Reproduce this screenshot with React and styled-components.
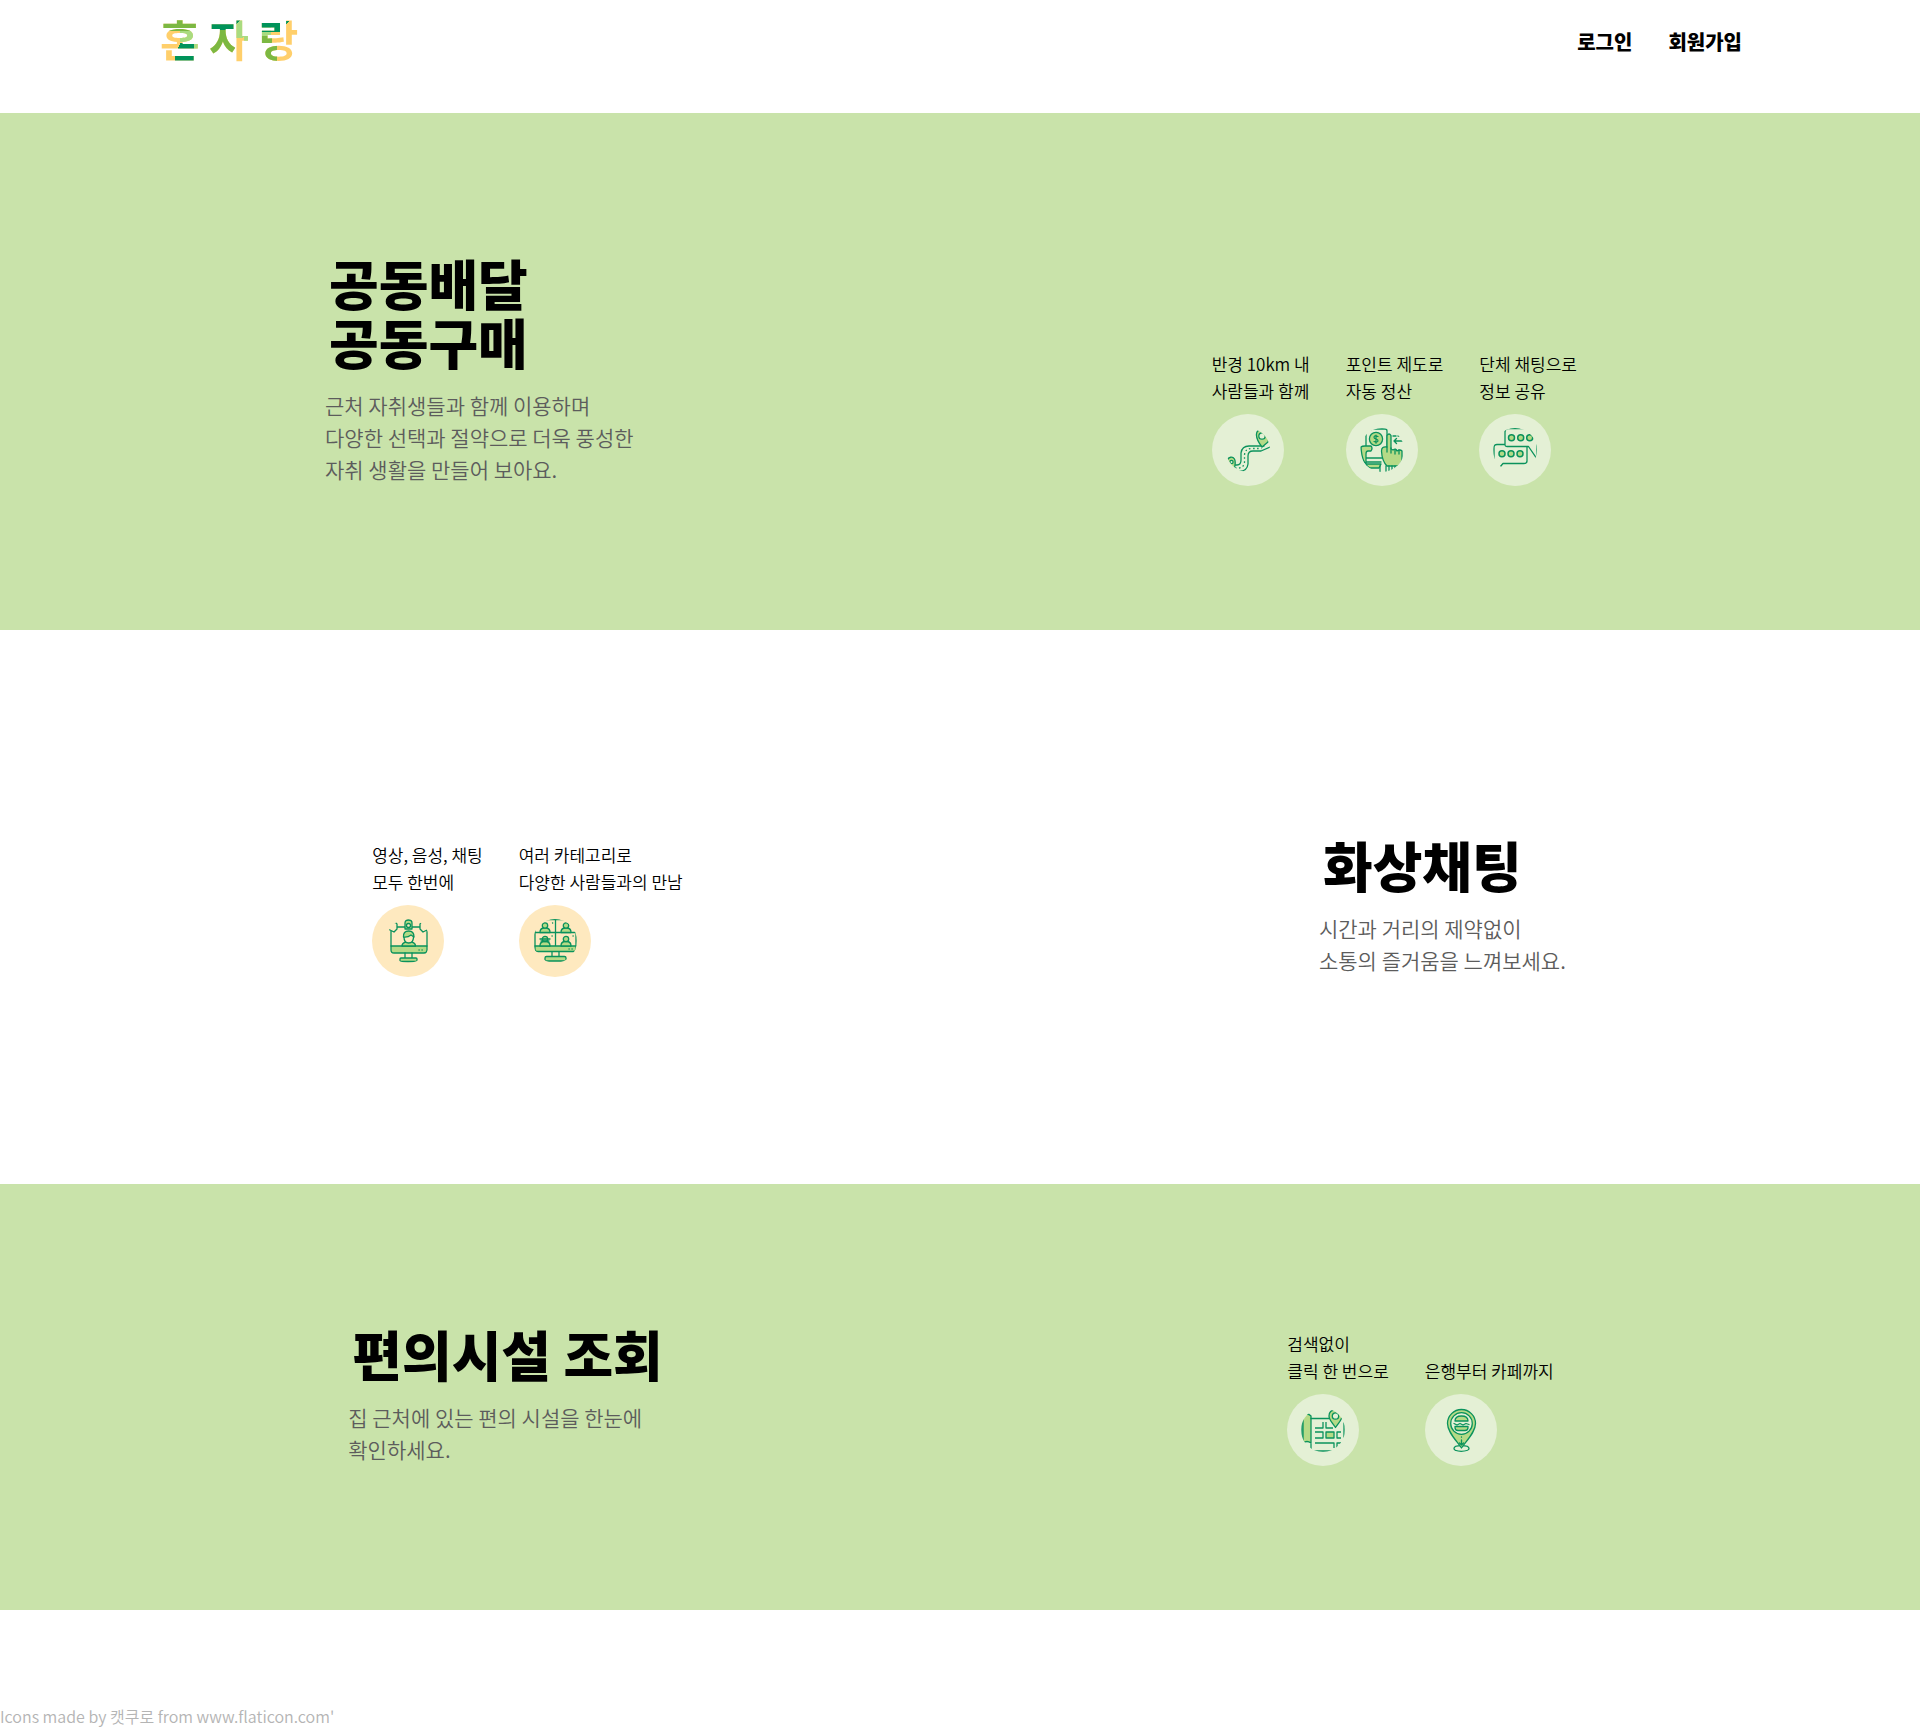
import React from "react";
import styled, { createGlobalStyle } from "styled-components";

const GREEN = "#c9e3aa";
const LINE = "#0a925c";
const FILL = "#b5da86";

const GlobalStyle = createGlobalStyle`
  *, *::before, *::after { box-sizing: border-box; }
  body {
    margin: 0;
    background: #fff;
    color: #000;
    font-family: "Noto Sans CJK KR", "Noto Sans", sans-serif;
  }
  h1, h2, p, ul { margin: 0; padding: 0; }
`;

const Header = styled.header`
  display: flex;
  justify-content: space-between;
  align-items: center;
  padding: 0 160px 37px;
`;

/* Patchwork of brand colours showing through the letters. */
const Logo = styled.a`
  font-size: 43px;
  line-height: 76px;
  font-weight: 700;
  text-decoration: none;
  color: transparent;
  background:
    linear-gradient(#7cb842, #7cb842) 0 0 / 46px 31px no-repeat,
    linear-gradient(#a9db80, #a9db80) 20px 31px / 20px 11px no-repeat,
    linear-gradient(115deg, transparent 5px, #00935a 5px) 15px 43px / 19px 20px no-repeat,
    linear-gradient(#a9db80, #a9db80) 34px 43px / 10px 9px no-repeat,
    linear-gradient(#00935a, #00935a) 46px 16px / 28px 14px no-repeat,
    linear-gradient(50deg, #7cb842 32px, transparent 32px) 46px 30px / 29px 26px no-repeat,
    linear-gradient(135deg, #00935a 6px, #a9db80 6px, #a9db80 20px, transparent 20px) 76px 16px / 10px 22px no-repeat,
    linear-gradient(#a9db80, #a9db80) 84px 33px / 6px 8px no-repeat,
    linear-gradient(135deg, transparent 7px, #00935a 7px) 97px 18px / 23px 14px no-repeat,
    linear-gradient(#a9db80, #a9db80) 97px 18px / 14px 18px no-repeat,
    linear-gradient(#7cb842, #7cb842) 97px 36px / 15px 8px no-repeat,
    linear-gradient(135deg, #00935a 4px, transparent 4px) 124px 21px / 6px 6px no-repeat,
    linear-gradient(#7cb842, #7cb842) 99px 45px / 18px 20px no-repeat,
    #ffcf6b;
  background-clip: text;
  -webkit-background-clip: text;
`;

const Nav = styled.nav`
  display: flex;
  padding-top: 8px;
`;

const NavLink = styled.a`
  margin: 0 18px;
  color: #000;
  font-size: 20px;
  line-height: 30px;
  font-weight: 900;
  text-decoration: none;
`;

const Section = styled.section`
  display: flex;
  justify-content: space-around;
  align-items: flex-end;
  padding: ${({ $tinted }) => ($tinted ? "140px 45px 144px" : "205px 45px 207px")};
  background: ${({ $tinted }) => ($tinted ? GREEN : "#fff")};
`;

const Title = styled.h2`
  padding-left: 4px;
  font-size: 54px;
  line-height: 59px;
  font-weight: 900;
  white-space: pre-line;
`;

const Description = styled.p`
  margin-top: 18px;
  padding-bottom: 1px;
  color: #5c5c5c;
  font-size: 21px;
  line-height: 32px;
  font-weight: 350;
  white-space: pre-line;
`;

const FeatureList = styled.ul`
  display: flex;
  align-items: flex-end;
  list-style: none;
`;

const Feature = styled.li`
  margin: 0 18px;
`;

const FeatureText = styled.p`
  margin-bottom: 10px;
  font-size: 17px;
  line-height: 27px;
  font-weight: 350;
  white-space: pre-line;
`;

const IconCircle = styled.div`
  display: flex;
  align-items: center;
  justify-content: center;
  width: 72px;
  height: 72px;
  border-radius: 50%;
  background: ${({ $warm }) => ($warm ? "#fee9bf" : "#e4f0d5")};
`;

const Drawing = styled.svg`
  display: block;
  width: 44px;
  height: 44px;
  border-radius: 50%;
  fill: none;
  stroke: ${LINE};
  stroke-width: 1.3;
  stroke-linecap: round;
  stroke-linejoin: round;
`;

const Footer = styled.footer`
  padding-top: 96px;
  color: #b4b4b4;
  font-size: 16px;
  line-height: 21px;
  font-weight: 350;
`;

const Icon = ({ children }) => (
  <Drawing viewBox="0 0 44 44" aria-hidden="true">
    {children}
  </Drawing>
);

const RouteIcon = () => (
  <Icon>
    <path d="M8 37h3q4 0 4-5v-7q1-7 8-7h15M12 43q9 1 10-7v-8q0-5 5-5h8l9-4" />
    <path d="M9 40q9 1 9.500-6v-7q.5-6.500 7-6.500h10" strokeDasharray="1.500 2.500" strokeLinecap="butt" />
    <path fill={FILL} d="M36 19c-3-4-6-9-5.500-13 .5-5 6-5 8.500-2 3 3 4 7 3 10z" />
    <circle cx="36" cy="8" r="3.200" fill="#e4f0d5" />
    <path fill={FILL} d="M8.500 40C3 38 1 35 1.500 32c1-3 5-4 7-1 1.500 3 .5 6 0 9z" />
    <circle cx="5.500" cy="34" r="1.600" fill="#e4f0d5" />
  </Icon>
);

const PaymentIcon = () => (
  <Icon>
    <path d="M6 6v13M11 2q1-1 2-1h12q2 0 2 2v16M6 30h17M6 34h15" />
    <circle cx="16" cy="11" r="6.600" fill={FILL} />
    <path d="M18 8.500q-4-1.500-4 .8 0 1.200 2 1.700 2.200.6 2 1.800-.5 2-4 .7M16 7v8.200" strokeWidth="1.200" />
    <path fill={FILL} d="M1 19q1-1 4-1h6q2 2 0 5H8q-2 0-2 3v10h15l-2 4H10Q2 36 1 19z" />
    <path fill={FILL} d="M27 7.500q2-3 4 0V21l2 1q3-2 4 1 3-2 5 0v8q0 4-4 7H27q-5-5-5.500-15 0-5 5.500-4z" />
    <path d="M27 19v5M31 20v5M35 22v4M39 22v4M20 38v6M26 38v6M29 38v5M32 38v5M35 38v4M38 8h3M33 8h3M34 13h10M36.500 10.500L34 13l2.500 2.500" />
  </Icon>
);

const ChatIcon = () => (
  <Icon>
    <path d="M12 4V17q0 1.500 2 1.500h21.500L44 31V6M12 4q0-3 3-3.300h16M12 16.500H4q-3 0-3 3V32M34 18.500V33q0 2.500-3 2.500H10L7 39" />
    <g fill={FILL} strokeWidth="1.500">
      <circle cx="18.500" cy="9.700" r="3" />
      <circle cx="27.700" cy="9.700" r="3" />
      <circle cx="36.700" cy="9.700" r="3" />
      <circle cx="9" cy="25.700" r="3" />
      <circle cx="18" cy="25.700" r="3" />
      <circle cx="27" cy="25.700" r="3" />
    </g>
  </Icon>
);

const VideoIcon = () => (
  <Icon>
    <path fill={FILL} d="M5 27h36v4q0 3-3 3H8q-3 0-3-3z" />
    <path d="M5 27V12M41 27V12M2 10l6 3 2-2M43 10l-6 3-2-2M7 4q3-1 4 1v5l-2 2M38 4q-3-1-4 1v5l2 2M11 8h23M19 34v5M26 34v5M33 31h.2M36 31h.2" />
    <rect x="14" y="39" width="17" height="3.500" rx="1" fill={FILL} />
    <path fill={FILL} d="M19 10V4q0-3 3.500-3T26 4v6z" />
    <circle cx="22.500" cy="6.500" r="2" fill="#fee9bf" />
    <path fill={FILL} d="M16 27q0-3 4-4h5.500q4 1 4 4z" />
    <path fill="#fee9bf" d="M18 18q0 6 4.700 6t4.800-6-4.800-5-4.700 5z" />
    <path fill={FILL} d="M17.500 18q-.5-6 5.200-6 5.300 0 5.300 6l-3-2q-3 2.500-7.500 2z" />
  </Icon>
);

const Person = ({ x, y }) => (
  <g transform={`translate(${x} ${y})`}>
    <path fill={FILL} d="M-5 9q0-4 3.500-4.500h3Q5 5 5 9z" />
    <circle cy="2" r="2.700" fill={FILL} />
  </g>
);

const MeetingIcon = () => (
  <Icon>
    <path d="M2 11v16M43 11v16M2 13.500h41M22.500 1v26M10 2q2-1.500 5-1.500h14q4 0 5 1.500M19.500 4h.2M40 17h.2M19 17h.2" />
    <path fill={FILL} d="M2 27h41v3q0 2.500-3 2.500H5q-3 0-3-2.500z" />
    <Person x={12} y={4.500} />
    <Person x={33} y={4.500} />
    <Person x={12} y={18} />
    <Person x={33} y={18} />
    <path d="M7 20h10M8 22h8" />
    <path d="M19 33v4.500M26 33v4.500M36 30h.2M39 30h.2" />
    <rect x="12" y="37.500" width="21" height="4.500" rx="1.500" fill={FILL} />
  </Icon>
);

const MapIcon = () => (
  <Icon>
    <path fill={FILL} d="M2 8q4-4 8 0v27q-4-3-8 0z" />
    <path d="M10 10.500h18M43 15v14M10 36v4q0 3 3 3h20M1 15v14" />
    <path strokeLinecap="butt" d="M14 20h8v-6M25 14v6h7M14 24h8v6h-8M40 24h-4v6h4M14 35h19v5M36 40v-5h4" />
    <rect x="25" y="24" width="8" height="6" fill={FILL} />
    <path fill={FILL} d="M34.500 19.500C31 14 28 12 28 8q0-6 6.500-6T41 8c0 4-3 6-6.500 11.500z" />
    <circle cx="34.500" cy="8" r="3.200" fill="#e4f0d5" />
  </Icon>
);

const PlaceIcon = () => (
  <Icon>
    <ellipse cx="22.500" cy="40.500" rx="7.500" ry="2.800" />
    <path fill={FILL} d="M22.500 40C17 32 8.500 24 8.500 15.500a14 14 0 0 1 28 0C36.500 24 28 32 22.500 40z" />
    <circle cx="22.500" cy="15.500" r="10.800" fill="#e4f0d5" />
    <path fill={FILL} d="M16 13q0-5 6.500-5t6.500 5zM16 18.500h13v1q0 3-3 3h-7q-3 0-3-3z" />
    <path d="M15 15.500l3 1.500 3-1.500 3 1.500 3-1.500 3 1M22.500 29v.2M22.500 32v5M20.500 35l2 2 2-2" />
  </Icon>
);

const sections = [
  {
    title: "공동배달\n공동구매",
    description: "근처 자취생들과 함께 이용하며\n다양한 선택과 절약으로 더욱 풍성한\n자취 생활을 만들어 보아요.",
    tinted: true,
    features: [
      { text: "반경 10km 내\n사람들과 함께", Glyph: RouteIcon },
      { text: "포인트 제도로\n자동 정산", Glyph: PaymentIcon },
      { text: "단체 채팅으로\n정보 공유", Glyph: ChatIcon },
    ],
  },
  {
    title: "화상채팅",
    description: "시간과 거리의 제약없이\n소통의 즐거움을 느껴보세요.",
    tinted: false,
    features: [
      { text: "영상, 음성, 채팅\n모두 한번에", Glyph: VideoIcon },
      { text: "여러 카테고리로\n다양한 사람들과의 만남", Glyph: MeetingIcon },
    ],
  },
  {
    title: "편의시설 조회",
    description: "집 근처에 있는 편의 시설을 한눈에\n확인하세요.",
    tinted: true,
    features: [
      { text: "검색없이\n클릭 한 번으로", Glyph: MapIcon },
      { text: "은행부터 카페까지", Glyph: PlaceIcon },
    ],
  },
];

function Intro({ title, description }) {
  return (
    <div>
      <Title>{title}</Title>
      <Description>{description}</Description>
    </div>
  );
}

function Features({ items, warm }) {
  return (
    <FeatureList>
      {items.map(({ text, Glyph }) => (
        <Feature key={text}>
          <FeatureText>{text}</FeatureText>
          <IconCircle $warm={warm}>
            <Glyph />
          </IconCircle>
        </Feature>
      ))}
    </FeatureList>
  );
}

export default function App() {
  return (
    <>
      <GlobalStyle />
      <Header>
        <Logo href="#home">혼 자 랑</Logo>
        <Nav>
          <NavLink href="#login">로그인</NavLink>
          <NavLink href="#signup">회원가입</NavLink>
        </Nav>
      </Header>
      <main>
        {sections.map(({ title, description, tinted, features }) => (
          <Section key={title} $tinted={tinted}>
            {tinted && <Intro title={title} description={description} />}
            <Features items={features} warm={!tinted} />
            {!tinted && <Intro title={title} description={description} />}
          </Section>
        ))}
      </main>
      <Footer>Icons made by 캣쿠로 from www.flaticon.com'</Footer>
    </>
  );
}
